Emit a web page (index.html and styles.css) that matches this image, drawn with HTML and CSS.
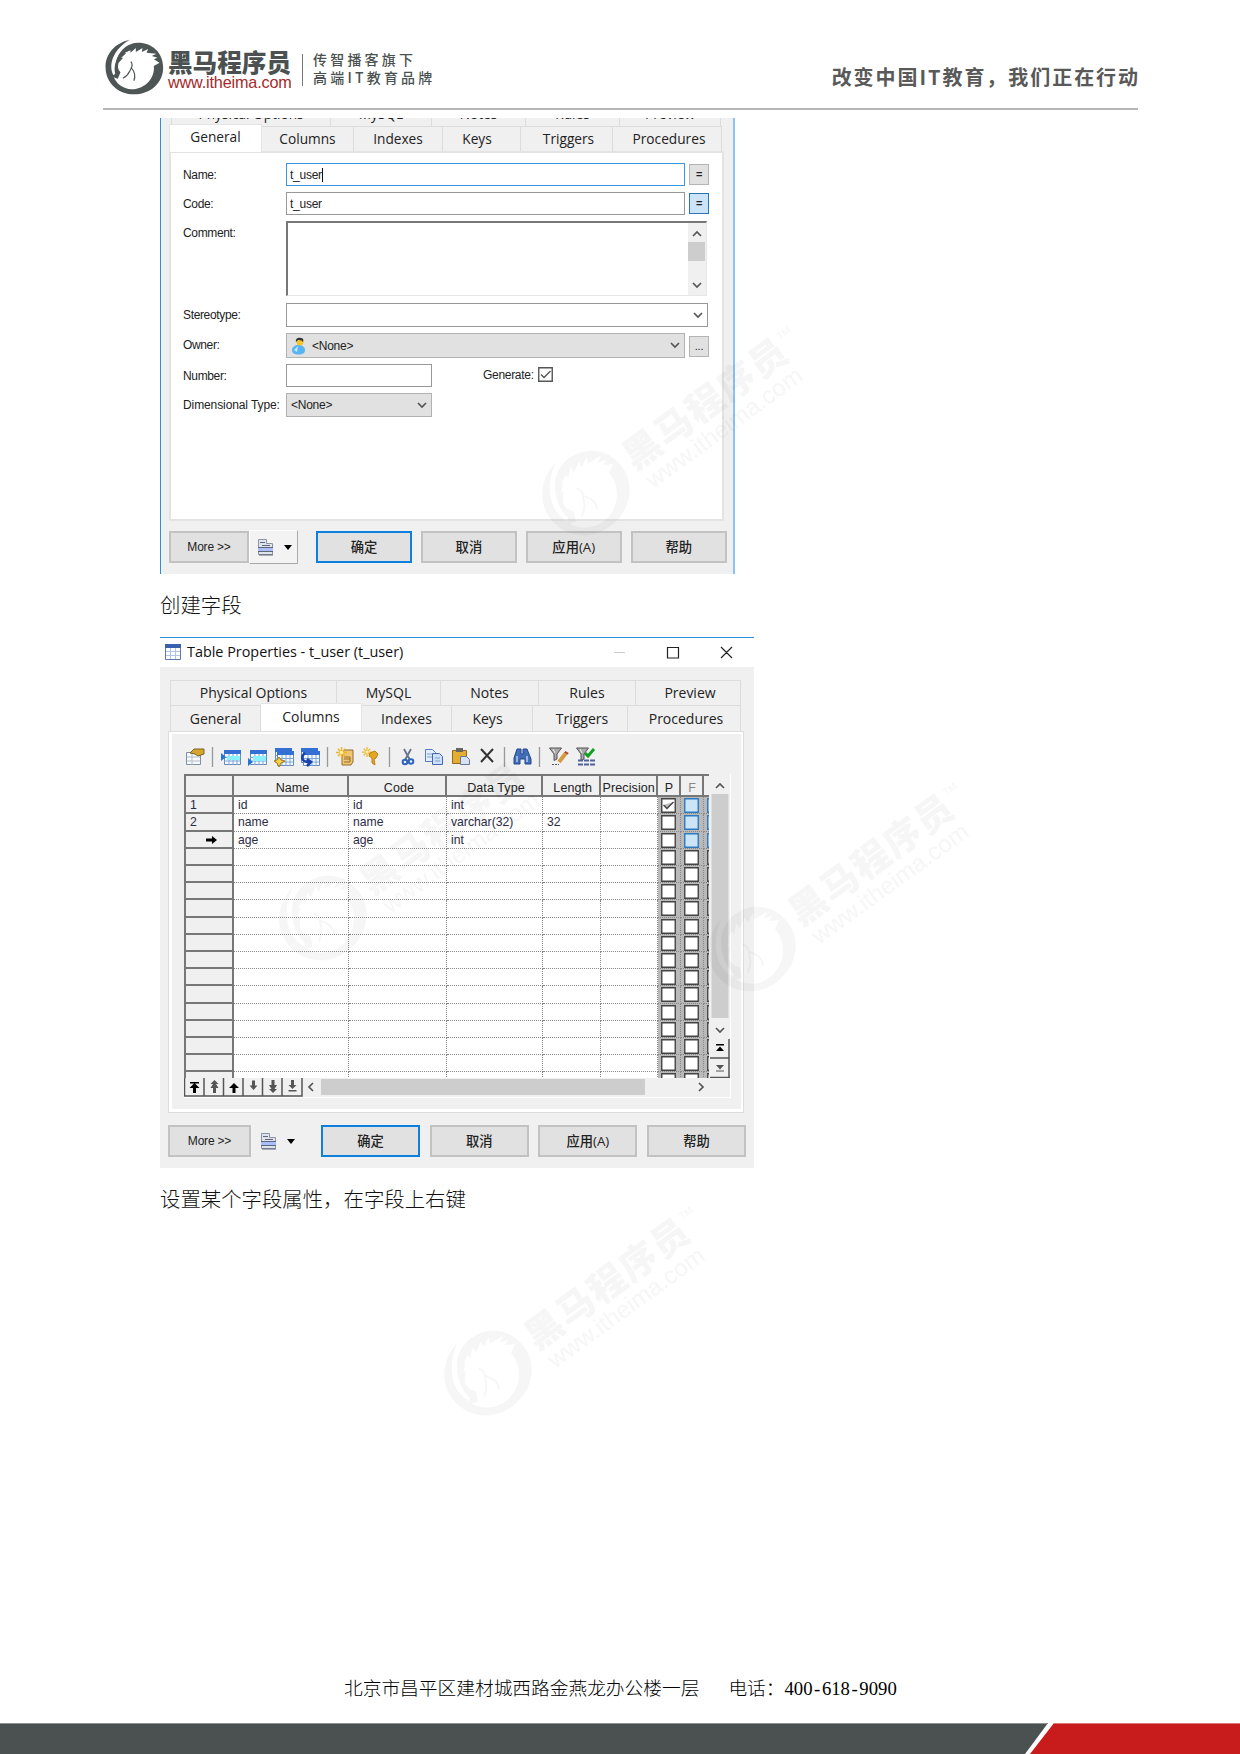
FILE: index.html
```html
<!DOCTYPE html>
<html lang="zh-CN">
<head>
<meta charset="utf-8">
<title>黑马程序员</title>
<link rel="stylesheet" href="styles.css">
</head>
<body>
<svg class="defs" width="0" height="0" aria-hidden="true">
  <symbol id="horse" viewBox="44 56 176 168">
    <path fill-rule="evenodd" d="M118 58C72 68 44 102 45 142C47 190 85 222 130 222C180 222 218 187 218 142C218 97 185 67 143 67C113 68 92 85 80 112C72 132 71 146 74 160L69 165C50 128 75 82 118 58ZM84 128L98 112L92 112L107 99L102 98L120 90L120 97L136 83L136 95L156 83L154 95L173 86L168 97L198 100L184 107L201 112L190 117L207 127L190 137C194 172 165 206 124 207C96 207 76 187 70 171L82 175L90 156C82 148 81 139 84 128Z"/>
    <path fill="none" stroke="currentColor" stroke-width="3.5" d="M121 124C131 136 121 144 118 152C112 165 105 170 97 174M123 143C133 155 137 165 130 181"/>
  </symbol>
  <symbol id="list" viewBox="0 0 17 18">
    <path fill="#dfe4ec" stroke="#8a94a4" d="M1.500 1.500h8v4h6v11h-14z"/><path fill="#a9bdff" d="M1 9.500h15v4H1z"/>
    <path stroke="#5c6779" d="M3 4.500h5M5 7.500h8M1 9.500h15M1 13.500h15M2 17h14"/>
  </symbol>
  <symbol id="grid" viewBox="0 0 17 15">
    <path fill="#f4faff" stroke="#6689bd" d="M.5.5h16v14H.5z"/><path fill="#346fd3" d="M0 0h17v4H0z"/>
    <path fill="none" stroke="#7fa6da" d="M.5 7.500h16M.5 11h16M5 4v11M9 4v11M13 4v11"/>
  </symbol>
  <symbol id="spark" viewBox="0 0 12 12"><path stroke="#edb52c" stroke-width="1.500" d="M6 0v12M0 6h12M2 2l8 8M10 2l-8 8"/><circle cx="6" cy="6" r="2" fill="#fff0a0"/></symbol>
  <symbol id="funnel" viewBox="0 0 13 14"><path fill="#a9a9a9" stroke="#555" d="M.5 1h12L8 7v5l-3 1.500V7z"/><path stroke="#eee" d="M4 2l2 4"/></symbol>
</svg>

<header class="head">
  <svg class="mark" viewBox="44 56 176 168"><use href="#horse" x="44" y="56" width="176" height="168"/></svg>
  <div class="brand"><b>黑马程序员</b><span>www.itheima.com</span></div>
  <div class="tag"><span>传智播客旗下</span><span>高端IT教育品牌</span></div>
  <div class="slogan">改变中国IT教育，我们正在行动</div>
</header>

<main class="doc">
  <section class="dlg dlg1">
    <div class="tabs cut">
      <span style="width:160px">Physical Options</span><span style="width:101px">MySQL</span><span style="width:94px">Notes</span><span style="width:94px">Rules</span><span style="width:101px">Preview</span>
    </div>
    <div class="tabs row2">
      <span class="on" style="width:93px">General</span><span style="width:92px">Columns</span><span style="width:89px">Indexes</span><span class="keys" style="width:78px">Keys</span><span class="far" style="width:92px">Triggers</span><span class="far" style="width:109px">Procedures</span>
    </div>
    <div class="panel form">
      <div class="f" style="height:29px"><label>Name:</label><i class="in focus" style="width:399px;height:23px">t_user<em></em></i><i class="sq">=</i></div>
      <div class="f" style="height:29px"><label>Code:</label><i class="in" style="width:399px;height:23px">t_user</i><i class="sq hot">=</i></div>
      <div class="f area-row"><label>Comment:</label><div class="area"><div class="sb">
        <svg width="10" height="7" viewBox="0 0 10 7"><path d="M1 6l4-4 4 4"/></svg><b></b><svg width="10" height="7" viewBox="0 0 10 7"><path d="M1 1l4 4 4-4"/></svg></div></div></div>
      <div class="f" style="height:30px"><label>Stereotype:</label><i class="in" style="width:422px;height:24px"><svg class="chev" width="10" height="7" viewBox="0 0 10 7"><path d="M1 1l4 4 4-4"/></svg></i></div>
      <div class="f" style="height:31px"><label>Owner:</label><i class="in gray" style="width:399px;height:25px">
        <svg class="user" width="15" height="18" viewBox="0 0 15 18"><path fill="#58b4f2" d="M1 13c0-3 3-5 6.500-5S14 10 14 13c0 3-2 4.500-6.500 4.500S1 16 1 13z"/><path fill="#c8e9ff" d="M3 13l4-4-1 6z"/><circle cx="9" cy="5" r="3.500" fill="#f3c42f"/><path fill="#333" d="M5 5c-1-4 3-5 5-4 2 0 3 2 2 4-1-2-4-2-5-2z"/></svg>&lt;None&gt;<svg class="chev" width="10" height="7" viewBox="0 0 10 7"><path d="M1 1l4 4 4-4"/></svg></i><i class="sq dots">...</i></div>
      <div class="f" style="height:29px"><label>Number:</label><i class="in" style="width:146px;height:23px"></i><span class="gen">Generate:</span><svg class="ck" width="15" height="15" viewBox="0 0 15 15"><path d="M.75.75h13.500v13.500H.75zM3 7.500l3 3 6.500-6.500"/></svg></div>
      <div class="f" style="height:24px"><label class="wide">Dimensional Type:</label><i class="in gray" style="width:146px;height:24px">&lt;None&gt;<svg class="chev" width="10" height="7" viewBox="0 0 10 7"><path d="M1 1l4 4 4-4"/></svg></i></div>
    </div>
    <div class="btns b1">
      <button class="more">More &gt;&gt;</button><span class="tool"><svg width="17" height="18"><use href="#list"/></svg><svg width="8" height="5"><path d="M0 0h8L4 5z"/></svg></span>
      <button class="def">确定</button><button>取消</button><button>应用(A)</button><button>帮助</button>
    </div>
  </section>

  <p class="cap cap1">创建字段</p>

  <section class="dlg dlg2">
    <div class="title">
      <svg width="16" height="16" viewBox="0 0 16 16"><path fill="#fff" stroke="#5f78ac" d="M.5.5h15v15H.5z"/><path fill="#3960ae" d="M0 0h16v4H0z"/><path fill="none" stroke="#b2c4e4" d="M1 7.500h14M1 11.500h14M5.500 4v11M10.500 4v11"/></svg>
      <span>Table Properties - t_user (t_user)</span>
      <svg class="win" width="120" height="14" viewBox="0 0 120 14"><path stroke="#ccc" d="M0 7.500h11"/><path fill="none" stroke="#222" stroke-width="1.200" d="M53.500 2.500h11v10.500h-11zM107 2l11 11M118 2l-11 11"/></svg>
    </div>
    <div class="tabs row1">
      <span style="width:167px">Physical Options</span><span style="width:104px">MySQL</span><span style="width:98px">Notes</span><span style="width:97px">Rules</span><span class="far" style="width:105px">Preview</span>
    </div>
    <div class="tabs row2">
      <span style="width:91px">General</span><span class="on" style="width:101px">Columns</span><span style="width:90px">Indexes</span><span class="keys" style="width:81px">Keys</span><span class="far" style="width:95px">Triggers</span><span class="far" style="width:113px">Procedures</span>
    </div>
    <div class="panel sheet">
      <svg class="bar" width="420" height="24" viewBox="182 745 420 24">
        <g stroke="#999" stroke-width="1.300"><path d="M212.500 747v20M327.500 747v20M389.500 747v20M504.500 747v20M539.500 747v20"/></g>
        <path fill="#f8fafc" stroke="#8190aa" d="M186.500 752.500h14v12h-14z"/><path stroke="#b5bccb" d="M187 757h13M187 761h13M192 753v12"/><path fill="#d7a52c" stroke="#7b6326" d="M190 753l4-4h10v5l-6 2-3-2z"/>
        <use href="#grid" x="224" y="750" width="17" height="15"/><path fill="#8af0fa" d="M227 756h13v4h-13z"/><path fill="#2674d8" d="M221 753l5 4-5 4z"/>
        <use href="#grid" x="250" y="750" width="17" height="15"/><path fill="#8af0fa" d="M253 756h13v5h-13z"/><path fill="#2674d8" d="M248 758l5 4-5 4z"/>
        <use href="#grid" x="275" y="748" width="17" height="15"/><use href="#grid" x="277" y="751" width="17" height="15"/><path fill="#f6d248" stroke="#a57912" d="M279 757l2 3 4 1-4 2-2 4-2-4-3-2 3-1z"/>
        <use href="#grid" x="301" y="748" width="17" height="15"/><use href="#grid" x="303" y="751" width="17" height="15"/><path fill="none" stroke="#1543ab" stroke-width="2.500" d="M305 753c-5 4-3 9 4 9M307 759l4 3-4 4"/>
        <path fill="#f0c770" stroke="#936d30" d="M342 752l3-2h8v12l-2 3h-9z"/><path fill="none" stroke="#936d30" d="M344 757h6v5h-6M344 759h6"/><use href="#spark" x="336" y="747" width="11" height="11"/>
        <use href="#spark" x="362" y="747" width="10" height="10"/><path fill="#e5a920" stroke="#b98218" d="M370 753l5-2 3 3-2 4-2 1 1 6-3-2v-5l-3-2z"/>
        <path stroke="#65748a" stroke-width="1.800" d="M404 749l6 11M411 749l-6 11"/><g fill="none" stroke="#2e64b9" stroke-width="2"><circle cx="405" cy="762" r="2.300"/><circle cx="411" cy="761.500" r="2.300"/></g>
        <path fill="#e2edff" stroke="#557bba" d="M425.500 749.500h7l3 3v9h-10z"/><path fill="#cfe0ff" stroke="#4168b0" d="M432.500 753.500h7l3 3v8h-10z"/><path stroke="#7e9fd0" d="M427 754h5M427 757h5M435 758h5M435 761h5"/>
        <path fill="#e4ae33" stroke="#936a1c" d="M452.500 750.500h14v13h-14z"/><path fill="#666" d="M456 748h7v4h-7z"/><path fill="#d9e2f2" stroke="#66789a" d="M460.500 756.500h6l3 3v5h-9z"/>
        <path stroke="#333" stroke-width="2" d="M481 749l12 13M493 749l-12 13"/>
        <path fill="#426fb9" stroke="#24478d" d="M517 749h4v5h2v-5h4l4 10v5h-6v-5h-5v5h-6v-6z"/><path stroke="#b6cdf3" stroke-width="1.500" d="M517 756v6M527 756v6"/>
        <use href="#funnel" x="549" y="747" width="13" height="14"/><path stroke="#d49b43" stroke-width="4" d="M566 753l-7 9"/><path stroke="#a9443c" stroke-width="4" d="M567 752l-1 1.500"/><path stroke="#555" stroke-dasharray="2 1" d="M552 764.500h7"/>
        <use href="#funnel" x="576" y="747" width="13" height="14"/><path fill="none" stroke="#13a021" stroke-width="3" d="M585 753l3 3 6-7"/><path stroke="#51619a" stroke-width="2" stroke-dasharray="5 1" d="M578 760.500h17M578 764.500h17"/>
      </svg>
      <div class="gridbox">
        <div class="gridtop">
          <div class="cells" id="cells">
            <div class="gr gh"><span></span><span>Name</span><span>Code</span><span>Data Type</span><span>Length</span><span>Precision</span><span>P</span><span class="dim">F</span><span></span></div>
          </div>
          <svg class="vs" width="21" height="304" viewBox="708 774 21 304">
            <path fill="#f0f0f0" d="M708 776h22v302h-22z"/><path fill="#cdcdcd" d="M710.500 794h17v224h-17z"/>
            <path class="ar" d="M715 788l4-4 4 4M715 1028l4 4 4-4"/>
            <path stroke="#555" stroke-width="1.500" d="M728 1039v39M709 1058h19M709 1077.500h20"/>
            <path d="M715 1044h8v1.500h-8zM715 1051l4-4.500 4 4.500z"/><path fill="#555" d="M715 1065h8l-4 4.500zM715 1070.500h8v1h-8z"/>
          </svg>
        </div>
        <svg class="hs" width="545" height="19" viewBox="184 1078 545 19">
          <path fill="#f0f0f0" d="M184 1078h545v19H184z"/><path fill="#cdcdcd" d="M321 1079h324v16H321z"/>
          <path stroke="#555" stroke-width="1.500" fill="none" d="M184.500 1078v18H302v-18M204 1078v18M223.500 1078v18M243 1078v18M262.500 1078v18M282 1078v18"/>
          <path class="ar" d="M313 1083l-4 4 4 4M699 1083l4 4-4 4"/>
          <path d="M190 1082h9v1.500h-9zM194.500 1083l5 5h-3.500v5h-3v-5h-3.500zM234 1083l5 5h-3.500v5h-3v-5h-3.500z"/>
          <path fill="#555" d="M214.500 1080l4 4h-2.500l2.500 4h-2.500v5h-3v-5h-2.500l2.500-4h-2.500zM253.500 1090l4-4.500h-2.500v-5h-3v5h-2.500zM273 1093l4-4h-2.500l2.500-4h-2.500v-5h-3v5h-2.500l2.500 4h-2.500zM292.500 1089l4-4h-2.500v-5h-3v5h-2.500zM288.500 1090h8v1.500h-8z"/>
        </svg>
      </div>
    </div>
    <div class="btns b2">
      <button class="more">More &gt;&gt;</button><span class="tool"><svg width="17" height="18"><use href="#list"/></svg><svg width="8" height="5"><path d="M0 0h8L4 5z"/></svg></span>
      <button class="def">确定</button><button>取消</button><button>应用(A)</button><button>帮助</button>
    </div>
  </section>

  <p class="cap cap2">设置某个字段属性，在字段上右键</p>
</main>

<footer class="foot">
  <p><span>北京市昌平区建材城西路金燕龙办公楼一层</span><span>电话：400<s>-</s>618<s>-</s>9090</span></p>
  <div class="strip"><div class="dark"></div><div class="red"></div></div>
</footer>

<svg class="wms" width="1240" height="1754" viewBox="0 0 1240 1754">
  <g transform="translate(586 492) rotate(-36)"><use href="#horse" x="-45" y="-43" width="90" height="86"/><text x="52" y="12" class="wm-name" textLength="192">黑马程序员</text><text x="56" y="37" class="wm-url" textLength="187">www.itheima.com</text><text x="246" y="-9" class="wm-tm">TM</text></g>
  <g transform="translate(323 917) rotate(-36)"><use href="#horse" x="-45" y="-43" width="90" height="86"/><text x="52" y="12" class="wm-name" textLength="192">黑马程序员</text><text x="56" y="37" class="wm-url" textLength="187">www.itheima.com</text><text x="246" y="-9" class="wm-tm">TM</text></g>
  <g transform="translate(752 948) rotate(-36)"><use href="#horse" x="-45" y="-43" width="90" height="86"/><text x="52" y="12" class="wm-name" textLength="192">黑马程序员</text><text x="56" y="37" class="wm-url" textLength="187">www.itheima.com</text><text x="246" y="-9" class="wm-tm">TM</text></g>
  <g transform="translate(488 1372) rotate(-36)"><use href="#horse" x="-45" y="-43" width="90" height="86"/><text x="52" y="12" class="wm-name" textLength="192">黑马程序员</text><text x="56" y="37" class="wm-url" textLength="187">www.itheima.com</text><text x="246" y="-9" class="wm-tm">TM</text></g>
</svg>
<script src="grid.js"></script>
</body>
</html>
```
FILE: styles.css
```css
* { box-sizing: border-box; }
body {
  margin: 0; width: 1240px; height: 1754px; position: relative; overflow: hidden;
  display: flex; flex-direction: column; background: #fff; color: #222;
  font-family: "Liberation Sans", "Noto Sans CJK SC", sans-serif;
}
.defs { position: absolute; }
i { font-style: normal; }

/* page header */
.head { height: 110px; margin: 0 102px 0 103px; border-bottom: 2px solid #b5b5b5; display: flex; align-items: flex-start; flex: none; }
.mark { width: 59px; height: 56px; margin: 39px 0 0 2px; fill: #4d5655; color: #4d5655; }
.brand { width: 124px; margin: 49px 0 0 4px; display: flex; flex-direction: column; white-space: nowrap; color: #4a5150; }
.brand b { font: 900 24.600px/25px "Noto Sans CJK SC", sans-serif; }
.brand span { font-size: 16.200px; line-height: 17px; color: #a52a2a; letter-spacing: -.15px; }
.tag { margin: 54px 0 0 10px; height: 32px; padding-left: 10px; border-left: 1px solid #777; display: flex; flex-direction: column; white-space: nowrap; color: #4a5150; font: 500 14px/17px "Noto Sans CJK SC", sans-serif; letter-spacing: 3.200px; }
.tag span { margin-top: -3px; }
.tag span + span { margin-top: 1px; }
.slogan { margin: 62px -2px 0 auto; white-space: nowrap; color: #595959; font: 700 20px/30px "Noto Sans CJK SC", sans-serif; letter-spacing: 1.950px; }

.doc { padding: 8px 0 0 160px; flex: 1; }
.dlg { background: #f0f0f0; position: relative; display: flex; flex-direction: column; }
.dlg1 { width: 575px; height: 456px; border-left: 1px solid #2a8edb; border-right: 2px solid #8dc2ee; }
.dlg2 { width: 594px; height: 531px; border-top: 1px solid #2a8edb; }

/* tabs */
.tabs { display: flex; flex: none; font: 14px/24px "Open Sans", "Noto Sans", sans-serif; }
.tabs span { flex: none; height: 26px; text-align: center; border: 1px solid #dcdcdc; border-left-width: 0; border-bottom: 0; white-space: nowrap; }
.tabs span:first-child { border-left-width: 1px; }
.tabs .on { background: #fff; margin-top: -2px; height: 28px; position: relative; line-height: 24px; border-color: #e4e4e4; }
.tabs .keys { padding-right: 9px; }
.tabs .far { padding-left: 4px; }
.cut { height: 8px; margin-left: 10px; align-items: flex-end; overflow: hidden; }
.cut span { height: 25px; }
.dlg1 .tabs { font-size: 13.700px; }
.dlg1 .row2 { height: 25px; margin-left: 8px; }
.dlg1 .on { line-height: 23px; }
.dlg2 .row1 { margin: 13px 0 0 10px; height: 25px; }
.dlg2 .row2 { margin-left: 10px; height: 26px; }
.dlg2 .row2 span { line-height: 25px; }
.panel { flex: none; border: 2px solid #e3e3e3; background: #fff; }

/* general form */
.form { margin-left: 8px; width: 555px; height: 370px; padding: 10px 0 0 12px; font-size: 12px; }
.f { display: flex; align-items: flex-start; letter-spacing: -.25px; }
.f label { width: 103px; line-height: 24px; white-space: nowrap; flex: none; letter-spacing: -.35px; }
.f .wide { letter-spacing: -.1px; }
.in { border: 1.500px solid #989898; background: #fff; display: flex; align-items: center; padding: 0 4px 0 3px; flex: none; }
.focus { border-color: #3a96e3; }
.focus em { width: 1px; height: 14px; background: #111; }
.gray { background: #e1e1e1; border-color: #b2b2b2; padding-left: 4px; }
.user { margin-right: 6px; }
.chev { margin-left: auto; }
.chev path, .sb path, .ar { fill: none; stroke: #555; stroke-width: 1.700; }
.sq { width: 20px; height: 21px; margin: 1px 0 0 4px; background: #e1e1e1; border: 1px solid #b4b4b4; text-align: center; line-height: 18px; font-size: 11px; font-weight: bold; flex: none; }
.hot { background: #cce4f7; border-color: #2c74b8; }
.dots { margin-top: 3px; font-weight: normal; }
.area-row { height: 82px; }
.area { width: 421px; height: 75px; border: 1px solid #e6e6e6; border-top: 2px solid #777; border-left: 2px solid #777; display: flex; justify-content: flex-end; }
.sb { width: 18px; background: #f0f0f0; display: flex; flex-direction: column; align-items: center; padding: 7px 1px 6px 0; }
.sb b { width: 17px; height: 19px; background: #cdcdcd; margin-top: 5px; margin-bottom: auto; }
.gen { margin: 4px 4px 0 51px; line-height: 15px; width: 51px; letter-spacing: -.3px; }
.ck { margin-top: 3px; fill: #fff; stroke: #555; stroke-width: 1.400; }

/* dialog buttons */
.btns { display: flex; }
.btns button { margin: 0; padding: 0 0 2px; border: 2px solid #c2c2c2; background: #e1e1e1; color: #222; font: 500 13.300px "Open Sans", "Noto Sans CJK SC", sans-serif; }
.btns .def { border: 2px solid #0f7fdc; }
.btns .more { font: 12px "Liberation Sans", sans-serif; letter-spacing: -.2px; padding: 0; }
.tool { display: flex; align-items: center; flex: none; }
.tool svg + svg { margin-left: 10px; }
.b1 { margin: 10px 0 0 8px; }
.b1 button { width: 96px; height: 32px; margin-right: 8.900px; flex: none; }
.b1 .more { width: 80px; margin-right: 0; }
.b1 .tool { width: 49px; height: 34px; margin: -1px 18px 0 0; padding-left: 7px; background: #f3f3f3; border: 1px solid #fff; border-right-color: #aaa; border-bottom-color: #aaa; }
.b2 { margin: 12px 0 0 8px; }
.b2 button { width: 99px; height: 32px; margin-right: 9.700px; flex: none; }
.b2 .more { width: 83px; margin-right: 0; }
.b2 .tool { width: 70px; padding-left: 9px; }

.cap { margin: 0; font: 300 20.400px/30px "Noto Sans CJK SC", sans-serif; color: #111; white-space: nowrap; }
.cap1 { height: 63px; padding-top: 15px; }
.cap2 { padding-top: 15px; }

.title { height: 29px; flex: none; background: #fff; display: flex; align-items: center; padding: 0 20px 2px 5px; }
.title span { margin-left: 6px; font: 14.400px/20px "Open Sans", sans-serif; color: #111; white-space: nowrap; }
.win { margin-left: auto; }

/* column sheet */
.sheet { margin-left: 8px; width: 576px; height: 382px; background: #f0f0f0; border: 1px solid #ddd; box-shadow: inset 3px 2px #fff, inset -2px -3px #fff; padding: 13px 0 0 13px; }
.bar { display: block; }
.gridbox { margin: 5px 0 0 2px; width: 547px; height: 324px; border-bottom: 1px solid #fff; border-right: 1px solid #fff; }
.gridtop { display: flex; height: 304px; }
.cells { width: 525px; height: 304px; overflow: hidden; border: 2px solid #777; border-right: 0; border-bottom: 0; background: #fff; }
.gr { display: grid; grid-template-columns: 48px 115px 98px 96px 57.500px 57.500px 23px 23px 7px; height: 17.200px; font-size: 12.200px; line-height: 16px; white-space: nowrap; }
.gr span { border-right: 1px dotted #888; border-bottom: 1px dotted #888; padding-left: 4px; overflow: hidden; color: #2b2b45; }
.gr span:first-child { border-right: 2px solid #777; border-bottom: 2px solid #777; background: #f0f0f0; }
.gh { height: 21.300px; line-height: 24px; font-size: 12.500px; }
.gh span, .gh span:first-child { border-right: 2px solid #777; border-bottom: 2px solid #777; background: #f0f0f0; color: #222; text-align: center; letter-spacing: .1px; }
.gh span:nth-child(n+6) { padding-left: 1px; }
.gh .dim { color: #888; }
.gr .box { background: #b9b9b9; padding: 0 0 0 3px; }
.box svg { display: block; margin-top: 1px; fill: #fff; stroke: #444; stroke-width: 1.400; }
.box .blue { fill: #cce4f7; stroke: #2c7ac0; }
.arrow { display: block; margin: 3px 0 0 15px; }
.vs, .hs { display: block; flex: none; }

/* footer */
.foot { flex: none; height: 82px; display: flex; flex-direction: column; justify-content: space-between; }
.foot p { margin: 3px 0 0 344px; display: flex; gap: 29px; font: 300 18.720px/28px "Liberation Serif", "Noto Sans CJK SC", serif; color: #000; white-space: nowrap; }
.foot s { display: inline-block; width: .5em; text-align: center; text-decoration: none; }
.strip { height: 31px; display: flex; }
.dark { width: 1048px; background: #4a5150; clip-path: polygon(0 0, 100% 0, 1025px 100%, 0 100%); border-top: 1px solid #8c9190; }
.red { width: 210px; margin-left: -18px; background: #c81b1c; clip-path: polygon(24px 0, 100% 0, 100% 100%, 0 100%); border-top: 1px solid #dc7777; }

/* watermarks lie over the whole sheet */
.wms { position: absolute; left: 0; top: 0; pointer-events: none; fill: #000; color: #000; opacity: .032; }
.wm-name { font: 900 37px "Noto Sans CJK SC", sans-serif; }
.wm-url { font: 24px "Liberation Sans", sans-serif; }
.wm-tm { font: 10px "Liberation Sans", sans-serif; }
```
FILE: grid.js
```js
const rows = [
  ["1", "id", "id", "int", "", ""],
  ["2", "name", "name", "varchar(32)", "32", ""],
  ["", "age", "age", "int", "", ""],
];
const arrow = '<svg class="arrow" width="13" height="10" viewBox="0 0 13 10"><path d="M1 3.500h6V1l5 4-5 4V6.500H1z"/></svg>';
const box = (cls, checked) =>
  `<span class="box"><svg class="${cls}" width="15" height="15" viewBox="0 0 15 15"><path d="M.75.75h13.500v13.500H.75z${checked ? "M2.500 7l3.500 3.500L12.500 4" : ""}"/></svg></span>`;
const cells = document.getElementById("cells");
for (let r = 0; r < 17; r++) {
  const data = rows[r] || ["", "", "", "", "", ""];
  const cls = r < 3 ? "blue" : "";
  const row = document.createElement("div");
  row.className = "gr";
  row.innerHTML =
    data.map((t, c) => `<span>${r === 2 && c === 0 ? arrow : t}</span>`).join("") +
    box("", r === 0) + box(cls, false) + box(cls, false);
  cells.append(row);
}
```
